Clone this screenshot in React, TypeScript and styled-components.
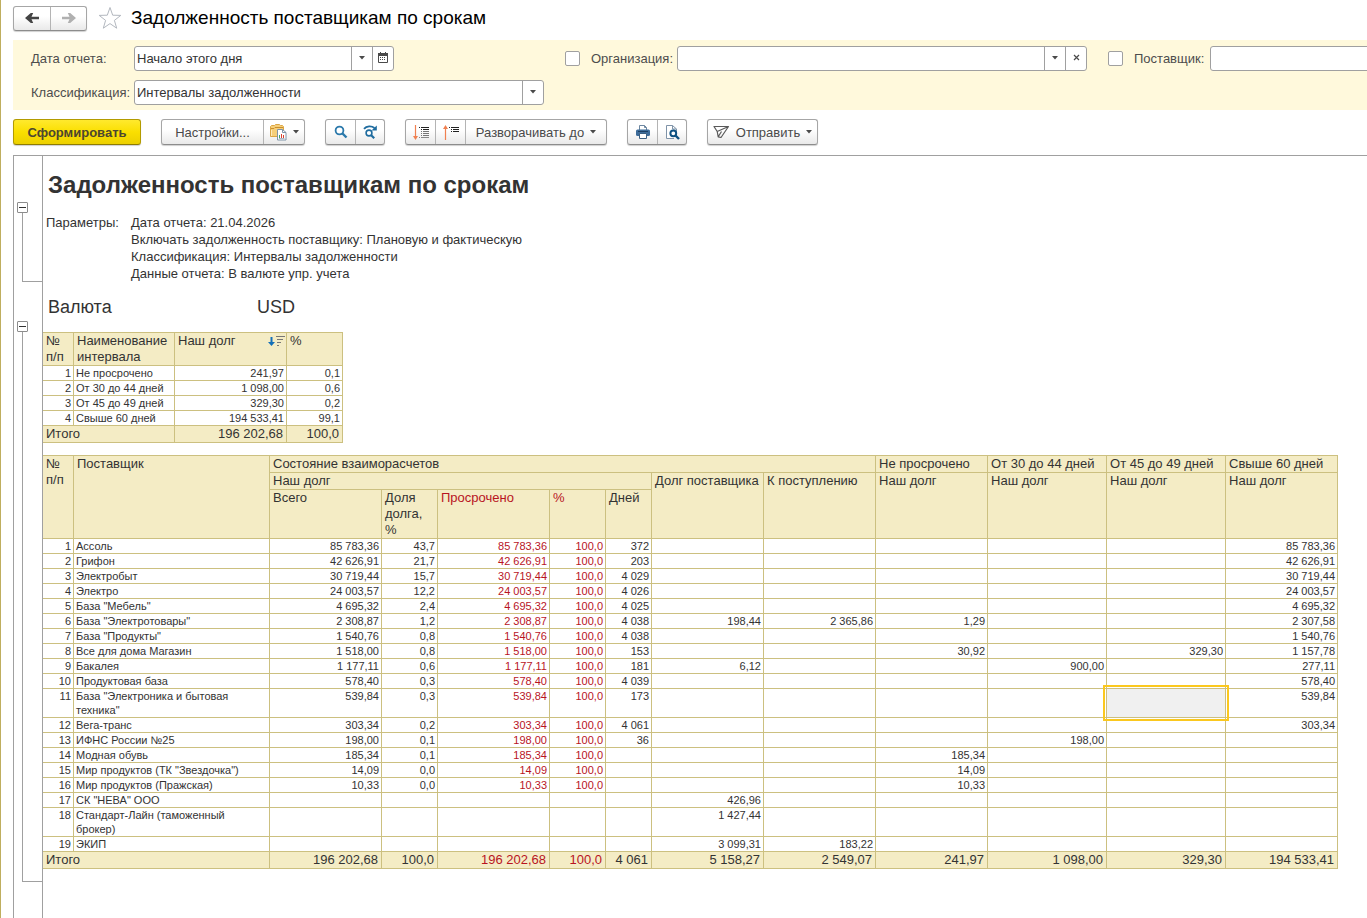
import React from "react";
import styled, { createGlobalStyle, css } from "styled-components";

const line = "#a0a0a0";
const gold = "#ccc080";
const cream = "#f4ecc5";
const ink = "#333333";
const red = "#b8141f";

const GlobalStyle = createGlobalStyle`
  *, *::before, *::after { box-sizing: border-box; }
  body { margin: 0; background: #fff; }
  body, button, input, table { font-family: "Liberation Sans", Arial, sans-serif; font-size: 13px; color: ${ink}; }
`;

const Page = styled.div`
  display: flex;
  flex-direction: column;
  min-height: 100vh;
  border-left: 1px solid #bfae5e;
  padding-left: 12px;
  overflow: hidden;
`;

const TitleBar = styled.header`
  display: flex;
  align-items: center;
  height: 40px;
  padding-bottom: 4px;
`;

const PageTitle = styled.h1`
  margin: 0;
  font-size: 19px;
  font-weight: 400;
  line-height: 24px;
  color: #000;
`;

const FavoriteButton = styled.button`
  display: flex;
  margin: 0 9px 0 11px;
  padding: 0;
  border: 0;
  background: none;
`;

const ButtonGroup = styled.div`
  display: flex;
  height: 26px;
  border: 1px solid #a6a6a6;
  border-bottom-color: #8c8c8c;
  border-radius: 3px;
  background: linear-gradient(#fff 40%, #e9e9e9);
  box-shadow: 0 1px 1px #d0d0d0;
`;

const NavGroup = styled(ButtonGroup)`
  height: 25px;
`;

const ToolButton = styled.button<{ $width: number }>`
  display: flex;
  align-items: center;
  justify-content: center;
  gap: 6px;
  width: ${(p) => p.$width}px;
  padding: 0;
  border: 0;
  background: none;
  color: #4a4a4a;
  white-space: nowrap;

  & + & { border-left: 1px solid #b4b4b4; }
`;

const PrimaryButton = styled.button`
  width: 128px;
  height: 26px;
  padding: 0;
  border: 1px solid #b39b00;
  border-bottom-color: #8f7c00;
  border-radius: 3px;
  background: linear-gradient(#ffe92e, #fadf00 50%, #ecd000);
  box-shadow: 0 1px 1px #d0d0d0;
  font-weight: 700;
  color: #4c4630;
`;

const Filters = styled.form`
  display: grid;
  grid-template-columns: 103px 410px auto auto;
  column-gap: 0;
  row-gap: 9px;
  justify-content: start;
  align-items: center;
  padding: 6px 0 5px 18px;
  background: #fff9dc;
`;

const FieldLabel = styled.label<{ $width?: number }>`
  width: ${(p) => (p.$width ? `${p.$width}px` : "auto")};
  color: #4d4d4d;
  white-space: nowrap;
`;

const Field = styled.div<{ $width: number }>`
  display: flex;
  width: ${(p) => p.$width}px;
  height: 25px;
  border: 1px solid ${line};
  border-radius: 3px;
  background: #fff;
`;

const FieldInput = styled.input`
  flex: 1;
  min-width: 0;
  padding: 0 2px;
  border: 0;
  outline: 0;
  background: none;
`;

const FieldButton = styled.button`
  display: flex;
  align-items: center;
  justify-content: center;
  width: 21px;
  padding: 0 0 2px;
  border: 0;
  border-left: 1px solid ${line};
  background: none;
`;

const OptionalFilter = styled.div`
  display: flex;
  align-items: center;
  margin-left: 21px;
`;

const CheckBox = styled.input`
  appearance: none;
  width: 15px;
  height: 15px;
  margin: 0 11px 0 0;
  border: 1px solid ${line};
  border-radius: 2px;
  background: #fff;
`;

const Toolbar = styled.div`
  display: flex;
  gap: 20px;
  padding: 9px 0 10px;
`;

const Report = styled.main`
  display: flex;
  flex: 1;
  flex-direction: column;
  border-top: 1px solid ${line};
  border-left: 1px solid ${line};
`;

const Section = styled.section<{ $grow?: boolean }>`
  display: flex;
  flex: ${(p) => (p.$grow ? 1 : "none")};
`;

const Gutter = styled.div<{ $top: number }>`
  display: flex;
  flex-direction: column;
  width: 28px;
  padding: ${(p) => p.$top}px 0 0 3px;
`;

const Toggle = styled.button`
  display: flex;
  align-items: center;
  justify-content: center;
  width: 11px;
  height: 11px;
  padding: 0;
  border: 1px solid #8c8c8c;
  border-radius: 1px;
  background: #fff;
`;

const Bracket = styled.div`
  flex: 1;
  margin-left: 5px;
  border-left: 1px solid ${line};
  border-bottom: 1px solid ${line};
`;

const SectionBody = styled.div<{ $bottom?: number }>`
  flex: 1;
  border-left: 1px solid ${line};
  padding-bottom: ${(p) => p.$bottom ?? 0}px;
`;

const ReportTitle = styled.h2`
  margin: 0;
  padding: 15px 0 15px 5px;
  font-size: 24px;
  line-height: 28px;
`;

const Params = styled.dl`
  display: grid;
  grid-template-columns: 85px auto;
  justify-content: start;
  margin: 0;
  padding-left: 3px;
  line-height: 17px;
`;

const ParamName = styled.dt``;

const ParamValue = styled.dd`
  grid-column: 2;
  margin: 0;
`;

const Currency = styled.div`
  display: grid;
  grid-template-columns: 209px auto;
  justify-content: start;
  padding: 14px 0 14px 5px;
  font-size: 18px;
  line-height: 22px;
`;

const DataTable = styled.table<{ $width: number }>`
  width: ${(p) => p.$width}px;
  table-layout: fixed;
  border-collapse: separate;
  border-spacing: 0;
  border-top: 1px solid ${gold};

  & + & { margin-top: 12px; }
`;

const cellBase = css`
  border: solid ${gold};
  border-width: 0 1px 1px 0;
  vertical-align: top;
`;

const HeadCell = styled.th<{ $red?: boolean }>`
  ${cellBase}
  padding: 0 0 0 3px;
  background: ${cream};
  font-weight: 400;
  line-height: 16px;
  text-align: left;
  color: ${(p) => (p.$red ? red : ink)};
`;

const SortableLabel = styled.span`
  display: flex;
  justify-content: space-between;
  align-items: center;
  padding-right: 1px;
`;

const Cell = styled.td<{ $num?: boolean; $red?: boolean; $selected?: boolean }>`
  ${cellBase}
  height: 15px;
  padding: 0 2px;
  font-size: 11px;
  line-height: 14px;
  text-align: ${(p) => (p.$num ? "right" : "left")};
  color: ${(p) => (p.$red ? red : ink)};
  ${(p) =>
    p.$selected &&
    css`
      position: relative;
      background: #f0f0f0;

      &::after {
        content: "";
        position: absolute;
        inset: -4px;
        border: 2px solid #fbc81e;
      }
    `}
`;

const TotalCell = styled.td<{ $num?: boolean; $red?: boolean }>`
  ${cellBase}
  padding: 0 3px;
  background: ${cream};
  line-height: 16px;
  text-align: ${(p) => (p.$num ? "right" : "left")};
  color: ${(p) => (p.$red ? red : ink)};
`;

const Caret = () => (
  <svg width="6" height="4" viewBox="0 0 6 4" aria-hidden="true">
    <path d="M0 0h6L3 3.5z" fill="#4a4a4a" />
  </svg>
);

const ArrowIcon = ({ forward }: { forward?: boolean }) => (
  <svg width="16" height="12" viewBox="0 0 16 12" aria-hidden="true">
    <path
      d={forward ? "M1 4.800h7.500L6.800 1h2.400L15 6l-5.800 5H6.800l1.700-3.800H1z" : "M15 4.800H7.500L9.200 1H6.800L1 6l5.800 5h2.400L7.500 7.200H15z"}
      fill={forward ? "#b0b0b0" : "#444"}
    />
  </svg>
);

const StarIcon = () => (
  <svg width="24" height="24" viewBox="0 0 24 24" aria-hidden="true">
    <path
      d="M12 1.500l2.700 7.700 8.100.2-6.400 5 2.300 7.800L12 17.600l-6.700 4.600 2.300-7.800-6.400-5 8.100-.2z"
      fill="#fff"
      stroke="#b3b8bf"
    />
  </svg>
);

const CalendarIcon = () => (
  <svg width="10" height="11" viewBox="0 0 10 11" aria-hidden="true">
    <path d="M.5 1.500h9v9h-9z" fill="none" stroke="#4a4a4a" />
    <path d="M0 1h10v3H0zM2 0h1v2H2zM7 0h1v2H7z" fill="#4a4a4a" />
    <path d="M2 5.500h6M2 7.500h6" stroke="#4a4a4a" strokeDasharray="1 1" />
  </svg>
);

const CrossIcon = () => (
  <svg width="7" height="7" viewBox="0 0 7 7" aria-hidden="true">
    <path d="M1 1l5 5M6 1 1 6" stroke="#4a4a4a" strokeWidth="1.200" />
  </svg>
);

const FolderReportIcon = () => (
  <svg width="17" height="17" viewBox="0 0 17 17" aria-hidden="true">
    <path d="M.5 12.500V2.500l1-1h3l1-1h4l1 1h2l1 1v10z" fill="#f6cf7a" stroke="#dba544" />
    <path d="M1 4.500h3l1-1h8" fill="none" stroke="#c98f2c" />
    <path d="M1.500 6v6" stroke="#fdebbd" />
    <path d="M7.500 5.500h5l3.500 3v7.500h-8.500z" fill="#fff" stroke="#7f93a8" />
    <path d="M12.500 5.500v3H16" fill="none" stroke="#7f93a8" />
    <path d="M9.500 11v3" stroke="#3fa66a" />
    <path d="M11.500 10v4M13.500 11v3" stroke="#d8412f" />
    <path d="M9 14.500h5.500" stroke="#a9b6c4" />
  </svg>
);

const SearchIcon = () => (
  <svg width="14" height="14" viewBox="0 0 14 14" aria-hidden="true">
    <circle cx="5.500" cy="5.500" r="3.900" fill="#fff" stroke="#2b79ab" strokeWidth="1.800" />
    <path d="M8.500 8.500l4 4" stroke="#2b79ab" strokeWidth="2.400" />
  </svg>
);

const SearchNextIcon = () => (
  <svg width="15" height="14" viewBox="0 0 15 14" aria-hidden="true">
    <circle cx="6" cy="8" r="2.900" fill="#fff" stroke="#1f6c9f" strokeWidth="1.600" />
    <path d="M8.200 10.200l3 3" stroke="#1f6c9f" strokeWidth="2.200" />
    <path d="M1 3.800C3.500.8 8.500.5 11.500 3" fill="none" stroke="#1f6c9f" strokeWidth="1.800" />
    <path d="M13.800.5v5H8.500z" fill="#1f6c9f" />
  </svg>
);

const ExpandIcon = () => (
  <svg width="16" height="15" viewBox="0 0 16 15" aria-hidden="true">
    <path d="M2.500 0v12" stroke="#f08050" strokeWidth="1.200" />
    <path d="M0 11h5l-2.500 4z" fill="#f08050" />
    <path d="M6 2.500h1M8 2.500h8M8 4.500h1M10 4.500h6" stroke="#222" />
    <path d="M8 6.500h1M10 6.500h6M8 8.500h1M10 8.500h6M8 10.500h1M10 10.500h6" stroke="#777" />
    <path d="M6 12.500h1M8 12.500h8" stroke="#888" />
  </svg>
);

const CollapseIcon = () => (
  <svg width="16" height="15" viewBox="0 0 16 15" aria-hidden="true">
    <path d="M2.500 3v12" stroke="#f08050" strokeWidth="1.200" />
    <path d="M0 4h5L2.500 0z" fill="#f08050" />
    <path d="M6 2.500h1M8 2.500h8M8 4.500h1M10 4.500h6M8 6.500h1M10 6.500h6" stroke="#222" />
  </svg>
);

const PrinterIcon = () => (
  <svg width="16" height="14" viewBox="0 0 16 14" aria-hidden="true">
    <path d="M4.500 5V.5h5l2 2V5" fill="#fff" stroke="#6d87a0" />
    <path d="M9.500.5v2h2" fill="none" stroke="#6d87a0" />
    <rect x="1" y="4.500" width="14" height="6.500" rx="1.500" fill="#3d6c9a" />
    <path d="M3 6.500h10" stroke="#1c3f63" />
    <path d="M4.500 8.500h7v5h-7z" fill="#fff" stroke="#3b5f82" />
  </svg>
);

const PreviewIcon = () => (
  <svg width="15" height="15" viewBox="0 0 15 15" aria-hidden="true">
    <path d="M9 13.500H1.500v-13h6l4 3.500v4" fill="#fff" stroke="#7f93a8" />
    <path d="M7.500.5V4h4" fill="none" stroke="#7f93a8" />
    <circle cx="8.300" cy="8.300" r="2.900" fill="#fff" stroke="#0e5182" strokeWidth="2" />
    <path d="M10.500 10.500l3.500 3.500" stroke="#0e5182" strokeWidth="2.400" />
  </svg>
);

const SendIcon = () => (
  <svg width="17" height="14" viewBox="0 0 17 14" aria-hidden="true">
    <path
      d="M1 1.500h14.500L8 12.500 5.200 11.800 4.200 6.500zM4.200 6.500l11.300-5M5.200 11.800l3.300-5.300"
      fill="none"
      stroke="#5a5a5a"
      strokeWidth="1.200"
      strokeLinejoin="round"
    />
  </svg>
);

const SortIcon = () => (
  <svg width="17" height="12" viewBox="0 0 17 12" aria-hidden="true">
    <path d="M3.500 2v6" stroke="#1470b8" strokeWidth="2" />
    <path d="M0 7h7l-3.500 4z" fill="#1470b8" />
    <path d="M8 1.500h9M9 4.500h6M9 7.500h4M9 10.500h2" stroke="#777" />
  </svg>
);

const MinusIcon = () => (
  <svg width="7" height="1" viewBox="0 0 7 1" aria-hidden="true">
    <path d="M0 .5h7" stroke="#333" />
  </svg>
);

const intervals = [
  ["Не просрочено", "241,97", "0,1"],
  ["От 30 до 44 дней", "1 098,00", "0,6"],
  ["От 45 до 49 дней", "329,30", "0,2"],
  ["Свыше 60 дней", "194 533,41", "99,1"],
];

const supplierWidths = [31, 196, 112, 56, 112, 56, 46, 112, 112, 112, 119, 119, 112];
const intervalWidths = [31, 101, 112, 56];

type Supplier = {
  name: string;
  debt?: [total: string, share: string, days: string];
  owed?: string;
  incoming?: string;
  current?: string;
  d30?: string;
  d45?: string;
  d60?: string;
};

const suppliers: Supplier[] = [
  { name: "Ассоль", debt: ["85 783,36", "43,7", "372"], d60: "85 783,36" },
  { name: "Грифон", debt: ["42 626,91", "21,7", "203"], d60: "42 626,91" },
  { name: "Электробыт", debt: ["30 719,44", "15,7", "4 029"], d60: "30 719,44" },
  { name: "Электро", debt: ["24 003,57", "12,2", "4 026"], d60: "24 003,57" },
  { name: 'База "Мебель"', debt: ["4 695,32", "2,4", "4 025"], d60: "4 695,32" },
  { name: 'База "Электротовары"', debt: ["2 308,87", "1,2", "4 038"], owed: "198,44", incoming: "2 365,86", current: "1,29", d60: "2 307,58" },
  { name: 'База "Продукты"', debt: ["1 540,76", "0,8", "4 038"], d60: "1 540,76" },
  { name: "Все для дома Магазин", debt: ["1 518,00", "0,8", "153"], current: "30,92", d45: "329,30", d60: "1 157,78" },
  { name: "Бакалея", debt: ["1 177,11", "0,6", "181"], owed: "6,12", d30: "900,00", d60: "277,11" },
  { name: "Продуктовая база", debt: ["578,40", "0,3", "4 039"], d60: "578,40" },
  { name: 'База "Электроника и бытовая техника"', debt: ["539,84", "0,3", "173"], d60: "539,84" },
  { name: "Вега-транс", debt: ["303,34", "0,2", "4 061"], d60: "303,34" },
  { name: "ИФНС России №25", debt: ["198,00", "0,1", "36"], d30: "198,00" },
  { name: "Модная обувь", debt: ["185,34", "0,1", ""], current: "185,34" },
  { name: 'Мир продуктов (ТК "Звездочка")', debt: ["14,09", "0,0", ""], current: "14,09" },
  { name: "Мир продуктов (Пражская)", debt: ["10,33", "0,0", ""], current: "10,33" },
  { name: 'СК "НЕВА" ООО', owed: "426,96" },
  { name: "Стандарт-Лайн (таможенный брокер)", owed: "1 427,44" },
  { name: "ЭКИП", owed: "3 099,31", incoming: "183,22" },
];

const totals = ["196 202,68", "100,0", "196 202,68", "100,0", "4 061", "5 158,27", "2 549,07", "241,97", "1 098,00", "329,30", "194 533,41"];

const selectedRow = 10;

const Columns = ({ widths }: { widths: number[] }) => (
  <colgroup>
    {widths.map((w, i) => (
      <col key={i} width={w} />
    ))}
  </colgroup>
);

const sum = (values: number[]) => values.reduce((a, b) => a + b, 0);

const IntervalTable = () => (
  <DataTable $width={sum(intervalWidths)}>
    <Columns widths={intervalWidths} />
    <thead>
      <tr>
        <HeadCell>№ п/п</HeadCell>
        <HeadCell>Наименование интервала</HeadCell>
        <HeadCell>
          <SortableLabel>
            Наш долг <SortIcon />
          </SortableLabel>
        </HeadCell>
        <HeadCell>%</HeadCell>
      </tr>
    </thead>
    <tbody>
      {intervals.map(([name, debt, share], i) => (
        <tr key={name}>
          <Cell $num>{i + 1}</Cell>
          <Cell>{name}</Cell>
          <Cell $num>{debt}</Cell>
          <Cell $num>{share}</Cell>
        </tr>
      ))}
    </tbody>
    <tfoot>
      <tr>
        <TotalCell colSpan={2}>Итого</TotalCell>
        <TotalCell $num>196 202,68</TotalCell>
        <TotalCell $num>100,0</TotalCell>
      </tr>
    </tfoot>
  </DataTable>
);

const SupplierTable = () => (
  <DataTable $width={sum(supplierWidths)}>
    <Columns widths={supplierWidths} />
    <thead>
      <tr>
        <HeadCell rowSpan={3}>№ п/п</HeadCell>
        <HeadCell rowSpan={3}>Поставщик</HeadCell>
        <HeadCell colSpan={7}>Состояние взаиморасчетов</HeadCell>
        <HeadCell>Не просрочено</HeadCell>
        <HeadCell>От 30 до 44 дней</HeadCell>
        <HeadCell>От 45 до 49 дней</HeadCell>
        <HeadCell>Свыше 60 дней</HeadCell>
      </tr>
      <tr>
        <HeadCell colSpan={5}>Наш долг</HeadCell>
        <HeadCell rowSpan={2}>Долг поставщика</HeadCell>
        <HeadCell rowSpan={2}>К поступлению</HeadCell>
        <HeadCell rowSpan={2}>Наш долг</HeadCell>
        <HeadCell rowSpan={2}>Наш долг</HeadCell>
        <HeadCell rowSpan={2}>Наш долг</HeadCell>
        <HeadCell rowSpan={2}>Наш долг</HeadCell>
      </tr>
      <tr>
        <HeadCell>Всего</HeadCell>
        <HeadCell>Доля долга, %</HeadCell>
        <HeadCell $red>Просрочено</HeadCell>
        <HeadCell $red>%</HeadCell>
        <HeadCell>Дней</HeadCell>
      </tr>
    </thead>
    <tbody>
      {suppliers.map((s, i) => (
        <tr key={s.name}>
          <Cell $num>{i + 1}</Cell>
          <Cell>{s.name}</Cell>
          <Cell $num>{s.debt?.[0]}</Cell>
          <Cell $num>{s.debt?.[1]}</Cell>
          <Cell $num $red>{s.debt?.[0]}</Cell>
          <Cell $num $red>{s.debt && "100,0"}</Cell>
          <Cell $num>{s.debt?.[2]}</Cell>
          <Cell $num>{s.owed}</Cell>
          <Cell $num>{s.incoming}</Cell>
          <Cell $num>{s.current}</Cell>
          <Cell $num>{s.d30}</Cell>
          <Cell $num $selected={i === selectedRow}>{s.d45}</Cell>
          <Cell $num>{s.d60}</Cell>
        </tr>
      ))}
    </tbody>
    <tfoot>
      <tr>
        <TotalCell colSpan={2}>Итого</TotalCell>
        {totals.map((value, i) => (
          <TotalCell key={i} $num $red={i === 2 || i === 3}>
            {value}
          </TotalCell>
        ))}
      </tr>
    </tfoot>
  </DataTable>
);

export default function App() {
  return (
    <>
      <GlobalStyle />
      <Page>
        <TitleBar>
          <NavGroup>
            <ToolButton $width={36} type="button" aria-label="Назад"><ArrowIcon /></ToolButton>
            <ToolButton $width={36} type="button" aria-label="Вперед"><ArrowIcon forward /></ToolButton>
          </NavGroup>
          <FavoriteButton type="button" aria-label="В избранное"><StarIcon /></FavoriteButton>
          <PageTitle>Задолженность поставщикам по срокам</PageTitle>
        </TitleBar>

        <Filters onSubmit={(e) => e.preventDefault()}>
          <FieldLabel htmlFor="date">Дата отчета:</FieldLabel>
          <Field $width={260}>
            <FieldInput id="date" defaultValue="Начало этого дня" />
            <FieldButton type="button" aria-label="Выбрать"><Caret /></FieldButton>
            <FieldButton type="button" aria-label="Календарь"><CalendarIcon /></FieldButton>
          </Field>
          <OptionalFilter>
            <CheckBox type="checkbox" aria-label="Отбор по организации" />
            <FieldLabel htmlFor="org" $width={86}>Организация:</FieldLabel>
            <Field $width={410}>
              <FieldInput id="org" />
              <FieldButton type="button" aria-label="Выбрать"><Caret /></FieldButton>
              <FieldButton type="button" aria-label="Очистить"><CrossIcon /></FieldButton>
            </Field>
          </OptionalFilter>
          <OptionalFilter>
            <CheckBox type="checkbox" aria-label="Отбор по поставщику" />
            <FieldLabel htmlFor="supplier" $width={76}>Поставщик:</FieldLabel>
            <Field $width={410}>
              <FieldInput id="supplier" />
            </Field>
          </OptionalFilter>
          <FieldLabel htmlFor="classification">Классификация:</FieldLabel>
          <Field $width={410}>
            <FieldInput id="classification" defaultValue="Интервалы задолженности" />
            <FieldButton type="button" aria-label="Выбрать"><Caret /></FieldButton>
          </Field>
        </Filters>

        <Toolbar>
          <PrimaryButton type="button">Сформировать</PrimaryButton>
          <ButtonGroup>
            <ToolButton $width={101} type="button">Настройки...</ToolButton>
            <ToolButton $width={41} type="button" aria-label="Варианты отчета"><FolderReportIcon /><Caret /></ToolButton>
          </ButtonGroup>
          <ButtonGroup>
            <ToolButton $width={29} type="button" aria-label="Найти"><SearchIcon /></ToolButton>
            <ToolButton $width={29} type="button" aria-label="Найти далее"><SearchNextIcon /></ToolButton>
          </ButtonGroup>
          <ButtonGroup>
            <ToolButton $width={29} type="button" aria-label="Развернуть все"><ExpandIcon /></ToolButton>
            <ToolButton $width={30} type="button" aria-label="Свернуть все"><CollapseIcon /></ToolButton>
            <ToolButton $width={141} type="button">Разворачивать до <Caret /></ToolButton>
          </ButtonGroup>
          <ButtonGroup>
            <ToolButton $width={29} type="button" aria-label="Печать"><PrinterIcon /></ToolButton>
            <ToolButton $width={29} type="button" aria-label="Предварительный просмотр"><PreviewIcon /></ToolButton>
          </ButtonGroup>
          <ButtonGroup>
            <ToolButton $width={109} type="button"><SendIcon />Отправить <Caret /></ToolButton>
          </ButtonGroup>
        </Toolbar>

        <Report>
          <Section>
            <Gutter $top={46}>
              <Toggle type="button" aria-label="Свернуть параметры"><MinusIcon /></Toggle>
              <Bracket />
            </Gutter>
            <SectionBody>
              <ReportTitle>Задолженность поставщикам по срокам</ReportTitle>
              <Params>
                <ParamName>Параметры:</ParamName>
                <ParamValue>Дата отчета: 21.04.2026</ParamValue>
                <ParamValue>Включать задолженность поставщику: Плановую и фактическую</ParamValue>
                <ParamValue>Классификация: Интервалы задолженности</ParamValue>
                <ParamValue>Данные отчета: В валюте упр. учета</ParamValue>
              </Params>
            </SectionBody>
          </Section>
          <Section>
            <Gutter $top={39}>
              <Toggle type="button" aria-label="Свернуть валюту"><MinusIcon /></Toggle>
              <Bracket />
            </Gutter>
            <SectionBody $bottom={13}>
              <Currency>
                <span>Валюта</span>
                <span>USD</span>
              </Currency>
              <IntervalTable />
              <SupplierTable />
            </SectionBody>
          </Section>
          <Section $grow>
            <Gutter $top={0} />
            <SectionBody />
          </Section>
        </Report>
      </Page>
    </>
  );
}
